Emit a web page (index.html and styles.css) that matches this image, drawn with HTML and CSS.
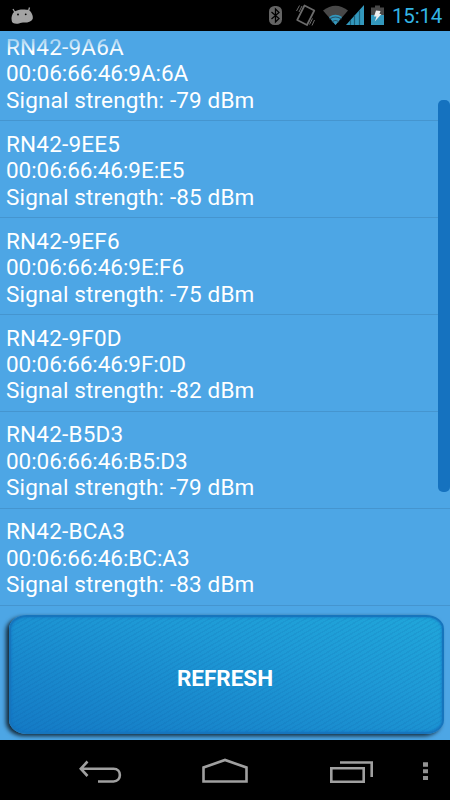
FILE: index.html
```
<!DOCTYPE html>
<html lang="en">
<head>
    <meta charset="UTF-8">
    <meta name="viewport" content="width=device-width, initial-scale=1.0">
    <title>Bluetooth devices</title>
    <link rel="stylesheet" href="styles.css">
</head>
<body>

    <header class="status-bar">
        <svg class="robot" width="24" height="20" viewBox="0 0 24 20">
            <path d="M3 3 L5 6.500 M19.500 1.500 L18.500 5" stroke="#a3a3a3" stroke-width="1.300"/>
            <path d="M4.500 5.500 C8 3 15 3 18.500 4 C21.500 5.500 23.500 10 22.700 13 C21 16 16.500 17 13 16.500 C10.500 16.500 9.500 18 7 17.700 C4 17.800 1.700 16.800 1.700 14.500 C1 11.500 2 7.500 4.500 5.500Z" fill="#a3a3a3"/>
            <circle cx="8" cy="8.500" r="0.900"/>
            <circle cx="15.700" cy="8.300" r="0.900"/>
        </svg>
        <svg class="status-icons" width="122" height="31" viewBox="265 0 122 31">
            <!-- bluetooth -->
            <rect x="269" y="6" width="13" height="19" rx="5.500" fill="#646464"/>
            <path d="M271.500 12 L279 18.500 L275.500 22 V9 L279 12.500 L271.500 19" fill="none" stroke="#000" stroke-width="1.300"/>
            <!-- vibrate -->
            <path d="M304.500 5.500 L314.300 10.500 L307 25 L297.200 20Z" fill="none" stroke="#6b6b6b" stroke-width="1.700" stroke-linejoin="round"/>
            <path d="M296.500 11 L299.500 5.500 M299 12 L302 6 M309.500 24.500 L312.500 18.500 M312 25.500 L314.500 20" stroke="#6b6b6b" stroke-width="1"/>
            <!-- wifi -->
            <path d="M323 10.500 Q335.500 1 348 10.500 L335.500 25Z" fill="#484848"/>
            <path d="M329 17 Q335.500 12.500 342 17 L335.500 25Z" fill="#3398bd"/>
            <path d="M329.500 19 Q335.500 15 341.500 19 M332 22 Q335.500 19 339 22" fill="none" stroke="#28536a" stroke-width="1.200"/>
            <!-- signal -->
            <path d="M346 25 L364 5 V25Z" fill="#3398bd"/>
            <path d="M350.500 20 V25 M354.500 15.500 V25 M359.500 10.500 V25" stroke="#1c6079" stroke-width="1.200"/>
            <!-- battery -->
            <path d="M371 7.500 H375 V5.500 H380 V7.500 H384 V15 H371Z" fill="#484848"/>
            <rect x="371" y="15" width="13" height="10" fill="#3398bd"/>
            <path d="M376 10.500 L380.500 11 L379.500 14 H381.500 L374.800 21.500 L376.500 16.500 H374Z" fill="#eee"/>
        </svg>
        <span class="clock">15:14</span>
    </header>

    <main class="screen">
        <div class="list-view">
            <ul class="devices">
                <li>
                    <div class="name">RN42-9A6A</div>
                    <div class="address">00:06:66:46:9A:6A</div>
                    <div class="signal">Signal strength: -79 dBm</div>
                </li>
                <li>
                    <div class="name">RN42-9EE5</div>
                    <div class="address">00:06:66:46:9E:E5</div>
                    <div class="signal">Signal strength: -85 dBm</div>
                </li>
                <li>
                    <div class="name">RN42-9EF6</div>
                    <div class="address">00:06:66:46:9E:F6</div>
                    <div class="signal">Signal strength: -75 dBm</div>
                </li>
                <li>
                    <div class="name">RN42-9F0D</div>
                    <div class="address">00:06:66:46:9F:0D</div>
                    <div class="signal">Signal strength: -82 dBm</div>
                </li>
                <li>
                    <div class="name">RN42-B5D3</div>
                    <div class="address">00:06:66:46:B5:D3</div>
                    <div class="signal">Signal strength: -79 dBm</div>
                </li>
                <li>
                    <div class="name">RN42-BCA3</div>
                    <div class="address">00:06:66:46:BC:A3</div>
                    <div class="signal">Signal strength: -83 dBm</div>
                </li>
            </ul>
            <div class="scrollbar"></div>
        </div>
        <button class="refresh">REFRESH</button>
    </main>

    <nav class="nav-bar">
        <svg width="450" height="60" viewBox="0 740 450 60" fill="none" stroke="#a0a0a0" stroke-width="2.600">
            <path d="M81 768.700 H113.500 C122 768.700 122 781.500 113.500 781.500 H98 M87.500 761.500 L80.800 768.700 L87.500 776"/>
            <path d="M203.500 781.500 V767.500 L225 760 L246.500 767.500 V781.500Z"/>
            <path d="M331.300 768.300 H363.700 V781.700 H331.300Z M340 762.500 H371.700 V777"/>
            <path d="M423 762.300 h5 v4.400 h-5Z M423 769.200 h5 v4 h-5Z M423 776 h5 v4 h-5Z" fill="#939393" stroke="none"/>
        </svg>
    </nav>

</body>
</html>
```
FILE: styles.css
```
body {
    margin: 0;
    width: 450px;
    height: 800px;
    display: flex;
    flex-direction: column;
    overflow: hidden;
    background: #000;
    color: #fff;
    font-family: Roboto, sans-serif;
}
.status-bar {
    height: 31px;
    flex: none;
    display: flex;
    align-items: center;
    box-sizing: border-box;
    padding: 0 8px 0 10px;
}
.status-icons {
    margin-left: auto;
}
.clock {
    width: 50px;
    margin-left: 5px;
    color: #33b5e5;
    font-size: 20.5px;
    line-height: 32px;
    letter-spacing: -0.2px;
    white-space: nowrap;
}
.screen {
    height: 709px;
    flex: none;
    display: flex;
    flex-direction: column;
    background: #4da6e5;
}
.list-view {
    position: relative;
    height: 575px;
    overflow: hidden;
}
.devices {
    list-style: none;
    margin: -6.5px 0 0;
    padding: 0;
}
.devices li {
    height: 96.85px;
    box-sizing: border-box;
    padding: 9.5px 6px 0;
    border-bottom: 1px solid #4595cf;
    font-size: 22.5px;
    line-height: 26.4px;
}
.name {
    letter-spacing: 0.2px;
}
.address {
    letter-spacing: -0.05px;
}
.signal {
    letter-spacing: 0.15px;
}
/* fading edge at the top of the scrolled list */
.list-view::before {
    content: "";
    position: absolute;
    top: 0;
    left: 0;
    right: 0;
    height: 20px;
    background: linear-gradient(rgba(77, 166, 229, 0.9), rgba(77, 166, 229, 0));
}
.scrollbar {
    position: absolute;
    top: 69px;
    right: 0;
    width: 12.5px;
    height: 392px;
    border-radius: 5px;
    background: #1572bf;
}
.refresh {
    margin: 9px 6px 6px 9px;
    padding: 6px 3px 0 0;
    height: 119px;
    border: 2px solid #1675bd;
    border-radius: 18px / 14px;
    background: repeating-linear-gradient(150deg, rgba(10, 80, 150, 0.1) 0 1.500px, transparent 1.500px 4px),
        linear-gradient(15deg, #147ac5, #1e9ad6 65%, #20a6da);
    box-shadow: -3px 2px 4px rgba(0, 0, 0, 0.75), inset 0 0 3px #1170c0;
    color: #fff;
    font-family: inherit;
    font-size: 22.5px;
    font-weight: bold;
}
.nav-bar {
    height: 60px;
    flex: none;
}
```
